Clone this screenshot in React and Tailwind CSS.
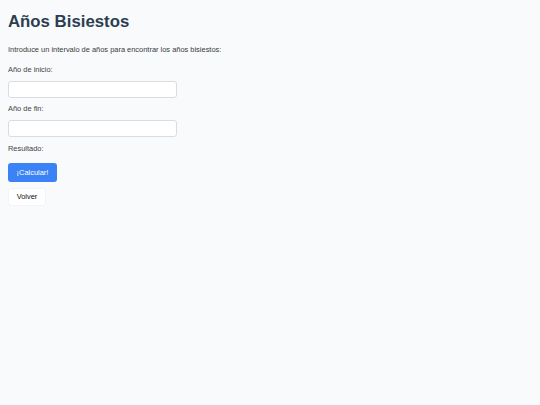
import React from 'react';

export default function App() {
  return (
    <div
      className="min-h-screen w-full bg-[#f8fafc] px-2 pt-3 text-[#333]"
      style={{ fontFamily: '"Liberation Sans", Arial, sans-serif' }}
    >
      <h1 className="text-[16.8px] leading-[20px] font-bold text-[#2c3e50]">Años Bisiestos</h1>

      <p className="mt-[13px] text-[7.45px] leading-[10px] text-[#3a3a3a]">
        Introduce un intervalo de años para encontrar los años bisiestos:
      </p>

      <label className="mt-[10px] block text-[7.45px] leading-[10px] text-[#444]">Año de inicio:</label>
      <input
        type="text"
        className="mt-[6px] block h-[17px] w-[169px] rounded-[3px] border border-[#d9dde2] bg-white"
      />

      <label className="mt-[5.5px] block text-[7.45px] leading-[10px] text-[#444]">Año de fin:</label>
      <input
        type="text"
        className="mt-[6px] block h-[17px] w-[169px] rounded-[3px] border border-[#d9dde2] bg-white"
      />

      <div className="mt-[7.5px] text-[7.45px] leading-[10px] text-[#444]">Resultado:</div>

      <div className="mt-[9px] flex flex-col items-start gap-[6px]">
        <button className="h-[19px] w-[49px] rounded-[3px] bg-[#3b82f6] text-[7.45px] text-white">
          ¡Calcular!
        </button>
        <button className="h-[18px] w-[38px] rounded-[3px] border border-[#f3f4f6] bg-white text-[7.45px] text-[#111]">
          Volver
        </button>
      </div>
    </div>
  );
}
